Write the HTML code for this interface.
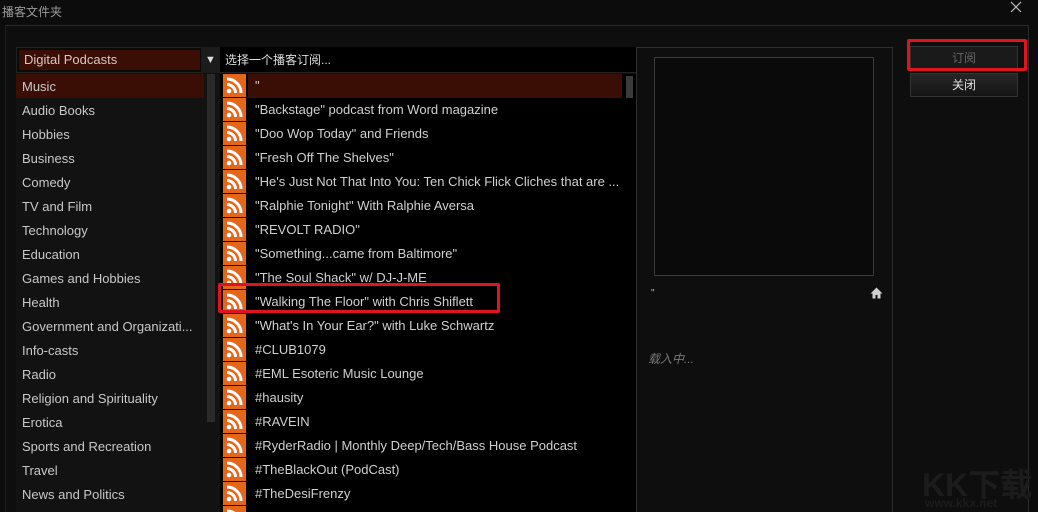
<!DOCTYPE html>
<html><head><meta charset="utf-8"><style>
*{margin:0;padding:0;box-sizing:border-box}
html,body{width:1038px;height:512px;overflow:hidden}
body{background:#0c0c0c;font-family:"Liberation Sans","Noto Sans CJK SC",sans-serif;color:#d0d0d0;position:relative;font-size:13px}
.abs{position:absolute}
.title{left:2px;top:3px;font-size:12px;color:#9a9a9a}
.frame{left:5px;top:25px;width:1024px;height:487px;border-top:1px solid #2c2c2c;border-right:1px solid #2c2c2c;background:#0e0e0e}
.frameL{left:5px;top:25px;width:1px;height:487px;background:#1e1e1e}
.left{left:16px;top:74px;width:204px;height:438px;background:#121212}
.combo{left:16px;top:47px;width:204px;height:26px;background:#0a0a0a;border:1px solid #222}
.comboIn{left:19px;top:50px;width:181px;height:20px;background:#3a0d05;color:#d8c8c0;font-size:13px;padding:2px 5px}
.arrow{left:201px;top:47px;width:19px;height:26px;background:#1c1c1c;color:#ddd;font-size:11px;text-align:center;line-height:26px}
.li{position:absolute;left:22px;font-size:13px;color:#c8c8c8}
.sel{left:16px;top:74px;width:188px;height:24px;background:#3a0d05}
.sb1{left:207px;top:74px;width:8px;height:348px;background:#2a2a2a}
.mid{left:220px;top:74px;width:416px;height:438px;background:#000;overflow:hidden}
.midhead{left:220px;top:47px;width:416px;height:26px;background:#000;border-bottom:1px solid #222;color:#ddd;padding:4px 5px;font-size:12px}
.sel2{left:28px;top:0;width:374px;height:24px;background:#3a0d05}
.sb2{left:406px;top:2px;width:7px;height:22px;background:#3a3a3a}
.ic{position:absolute;left:3px;width:23px;height:23px;background:#e5661a}
.ic svg{display:block}
.mt{position:absolute;left:35px;font-size:13px;color:#d0d0d0;white-space:nowrap;width:365px;overflow:hidden}
.vline{width:1px;background:#2e2e2e}
.preview{left:654px;top:57px;width:220px;height:219px;border:1px solid #3a3a3a;background:#0a0a0a}
.btn{left:910px;width:108px;height:24px;background:#1a1a1a;border:1px solid #333;text-align:center;font-size:12px;line-height:22px}
.red{border:3px solid #e0141e;border-radius:2px}
</style></head><body>
<div class="abs title">播客文件夹</div>
<svg class="abs" style="left:1010px;top:1px" width="12" height="12" viewBox="0 0 12 12"><path d="M1 1L11 11M11 1L1 11" stroke="#bbb" stroke-width="1.2"/></svg>
<div class="abs frame"></div>
<div class="abs frameL"></div>
<div class="abs vline" style="left:636px;top:47px;height:465px"></div>
<div class="abs vline" style="left:892px;top:47px;height:465px"></div>
<div class="abs vline" style="left:637px;top:47px;width:255px;height:1px"></div>

<div class="abs left"></div>
<div class="abs combo"></div>
<div class="abs comboIn">Digital Podcasts</div>
<div class="abs arrow">▼</div>
<div class="abs sel"></div>
<div class="abs sb1"></div>
<div class="li" style="top:79px">Music</div>
<div class="li" style="top:103px">Audio Books</div>
<div class="li" style="top:127px">Hobbies</div>
<div class="li" style="top:151px">Business</div>
<div class="li" style="top:175px">Comedy</div>
<div class="li" style="top:199px">TV and Film</div>
<div class="li" style="top:223px">Technology</div>
<div class="li" style="top:247px">Education</div>
<div class="li" style="top:271px">Games and Hobbies</div>
<div class="li" style="top:295px">Health</div>
<div class="li" style="top:319px">Government and Organizati...</div>
<div class="li" style="top:343px">Info-casts</div>
<div class="li" style="top:367px">Radio</div>
<div class="li" style="top:391px">Religion and Spirituality</div>
<div class="li" style="top:415px">Erotica</div>
<div class="li" style="top:439px">Sports and Recreation</div>
<div class="li" style="top:463px">Travel</div>
<div class="li" style="top:487px">News and Politics</div>

<div class="abs midhead">选择一个播客订阅...</div>
<div class="abs mid" id="m"><div class="abs sel2"></div><div class="abs sb2"></div></div>

<div class="abs preview"></div>
<div class="abs" style="left:651px;top:288px;font-size:10px;color:#bbb">"</div>
<svg class="abs" style="left:870px;top:287px" width="13" height="12" viewBox="0 0 13 12"><path d="M6.5 0.5L0.5 6.5H2.5V11.5H5.5V8H7.5V11.5H10.5V6.5H12.5Z" fill="#cfcfcf"/></svg>
<div class="abs" style="left:648px;top:350px;font-size:12px;color:#777;font-style:italic">载入中...</div>

<div class="abs btn" style="top:46px;color:#666">订阅</div>
<div class="abs btn" style="top:73px;color:#e0e0e0;background:linear-gradient(#262626,#151515)">关闭</div>
<div class="abs red" style="left:907px;top:39px;width:120px;height:32px"></div>
<div class="abs red" style="left:218px;top:283px;width:282px;height:30px"></div>
<div class="abs" style="left:922px;top:460px;font-size:32px;font-weight:bold;color:#1c1c1c;white-space:nowrap">KK下载</div>
<div class="abs" style="left:925px;top:496px;font-size:12px;font-weight:bold;color:#1c1c1c;white-space:nowrap">www.kkx.net</div>

<script>
var t=['"','"Backstage" podcast from Word magazine','"Doo Wop Today" and Friends','"Fresh Off The Shelves"','"He\'s Just Not That Into You: Ten Chick Flick Cliches that are ...','"Ralphie Tonight" With Ralphie Aversa','"REVOLT RADIO"','"Something...came from Baltimore"','"The Soul Shack" w/ DJ-J-ME','"Walking The Floor" with Chris Shiflett','"What\'s In Your Ear?" with Luke Schwartz','#CLUB1079','#EML Esoteric Music Lounge','#hausity','#RAVEIN','#RyderRadio | Monthly Deep/Tech/Bass House Podcast','#TheBlackOut (PodCast)','#TheDesiFrenzy',''];
var h='';
for(var i=0;i<t.length;i++){var y=i*24;
h+='<div class="ic" style="top:'+y+'px"><svg width="23" height="23" viewBox="0 0 23 23"><circle cx="6" cy="17" r="2.3" fill="#fff"/><path d="M4 10.5a8.5 8.5 0 0 1 8.5 8.5M4 5a14 14 0 0 1 14 14" stroke="#fff" stroke-width="3" fill="none"/></svg></div>';
h+='<div class="mt" style="top:'+(y+4)+'px">'+t[i].replace(/</g,'&lt;')+'</div>';}
document.getElementById('m').insertAdjacentHTML('beforeend',h);
</script>
</body></html>
